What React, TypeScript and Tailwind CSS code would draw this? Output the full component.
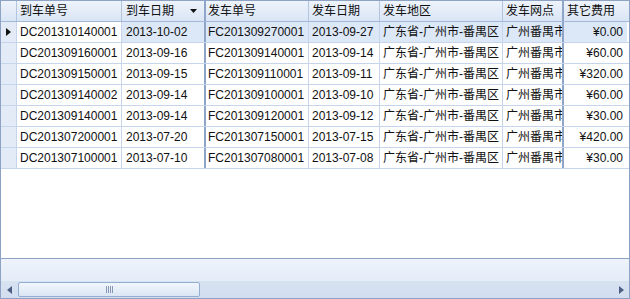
import React from "react";

const rows = [
  ["DC201310140001", "2013-10-02", "FC201309270001", "2013-09-27", "广东省-广州市-番禺区", "广州番禺市", "¥0.00"],
  ["DC201309160001", "2013-09-16", "FC201309140001", "2013-09-14", "广东省-广州市-番禺区", "广州番禺市", "¥60.00"],
  ["DC201309150001", "2013-09-15", "FC201309110001", "2013-09-11", "广东省-广州市-番禺区", "广州番禺市", "¥320.00"],
  ["DC201309140002", "2013-09-14", "FC201309100001", "2013-09-10", "广东省-广州市-番禺区", "广州番禺市", "¥60.00"],
  ["DC201309140001", "2013-09-14", "FC201309120001", "2013-09-12", "广东省-广州市-番禺区", "广州番禺市", "¥30.00"],
  ["DC201307200001", "2013-07-20", "FC201307150001", "2013-07-15", "广东省-广州市-番禺区", "广州番禺市", "¥420.00"],
  ["DC201307100001", "2013-07-10", "FC201307080001", "2013-07-08", "广东省-广州市-番禺区", "广州番禺市", "¥30.00"],
];

const font = { fontFamily: '"Liberation Sans", "Noto Sans CJK SC", sans-serif' };

export default function App() {
  const cellBase = "h-full flex items-center overflow-hidden whitespace-nowrap shrink-0";
  return (
    <div
      className="w-[630px] h-[299px] border border-[#8ea3c4] flex flex-col bg-white text-[12px] leading-none text-[#111]"
      style={font}
    >
      {/* Header */}
      <div className="h-[21px] flex shrink-0 border-b border-[#a3b7d6] bg-gradient-to-b from-[#eef3fb] to-[#d9e5f5]">
        <div className="w-[16px] border-r border-[#b3c4de] shrink-0" />
        <div className={`${cellBase} w-[105px] pl-[3px] border-r border-[#b3c4de]`}>到车单号</div>
        <div className={`${cellBase} w-[84px] pl-[4px] border-r-2 border-[#8fa5c7] justify-between pr-[7px]`}>
          <span>到车日期</span>
          <svg width="7" height="4" viewBox="0 0 7 4"><path d="M0 0h7L3.5 4z" fill="#111" /></svg>
        </div>
        <div className={`${cellBase} w-[103px] pl-[2px] border-r border-[#b3c4de]`}>发车单号</div>
        <div className={`${cellBase} w-[71px] pl-[3px] border-r border-[#b3c4de]`}>发车日期</div>
        <div className={`${cellBase} w-[123px] pl-[3px] border-r border-[#b3c4de]`}>发车地区</div>
        <div className={`${cellBase} w-[59px] pl-[3px]`}>发车网点</div>
        <div className={`${cellBase} w-[65px] pl-[3px] border-l-2 border-[#8fa5c7]`}>其它费用</div>
      </div>
      {/* Body */}
      <div className="flex-1 flex flex-col border-b border-[#8ea3c4]">
        {rows.map((r, i) => {
          const sel = i === 0;
          const bg = sel ? "bg-[#dce7f7]" : "bg-white";
          return (
            <div key={i} className="h-[21px] flex shrink-0 border-b border-[#c6d5ec]">
              <div className="w-[16px] shrink-0 border-r border-[#c6d5ec] bg-[#e3ebf7] flex items-center pl-[5px]">
                {sel && (
                  <svg width="5" height="8" viewBox="0 0 5 8"><path d="M0 0l5 4-5 4z" fill="#111" /></svg>
                )}
              </div>
              <div className={`${cellBase} w-[105px] pl-[3px] border-r border-[#c6d5ec] bg-white`}>{r[0]}</div>
              <div className={`${cellBase} w-[84px] pl-[4px] border-r-2 border-[#8fa5c7] ${bg}`}>{r[1]}</div>
              <div className={`${cellBase} w-[103px] pl-[2px] border-r border-[#c6d5ec] ${bg}`}>{r[2]}</div>
              <div className={`${cellBase} w-[71px] pl-[3px] border-r border-[#c6d5ec] ${bg}`}>{r[3]}</div>
              <div className={`${cellBase} w-[123px] pl-[3px] border-r border-[#c6d5ec] ${bg}`}>{r[4]}</div>
              <div className={`${cellBase} w-[59px] pl-[3px] ${bg}`}>{r[5]}</div>
              <div className={`${cellBase} w-[65px] pr-[4px] justify-end border-l-2 border-[#8fa5c7] ${bg}`}>{r[6]}</div>
            </div>
          );
        })}
      </div>
      {/* Footer */}
      <div className="h-[22px] shrink-0 bg-gradient-to-b from-[#eef3fb] to-[#e4ecf8]" />
      {/* Scrollbar */}
      <div className="h-[17px] shrink-0 flex items-center bg-gradient-to-b from-[#d7e2f1] to-[#d2deef]">
        <div className="w-[17px] flex items-center justify-center shrink-0">
          <svg width="5" height="8" viewBox="0 0 5 8"><path d="M5 0L0 4l5 4z" fill="#4d5e84" /></svg>
        </div>
        <div className="w-[182px] h-[15px] rounded-[2px] border border-[#94add1] bg-gradient-to-b from-[#f1f6fd] to-[#dbe6f4] flex items-center justify-center gap-[1px]">
          <div className="w-px h-[7px] bg-[#8798b5]" />
          <div className="w-px h-[7px] bg-[#8798b5]" />
          <div className="w-px h-[7px] bg-[#8798b5]" />
          <div className="w-px h-[7px] bg-[#8798b5]" />
        </div>
        <div className="flex-1" />
        <div className="w-[16px] flex items-center justify-center shrink-0">
          <svg width="5" height="8" viewBox="0 0 5 8"><path d="M0 0l5 4-5 4z" fill="#4d5e84" /></svg>
        </div>
      </div>
    </div>
  );
}
